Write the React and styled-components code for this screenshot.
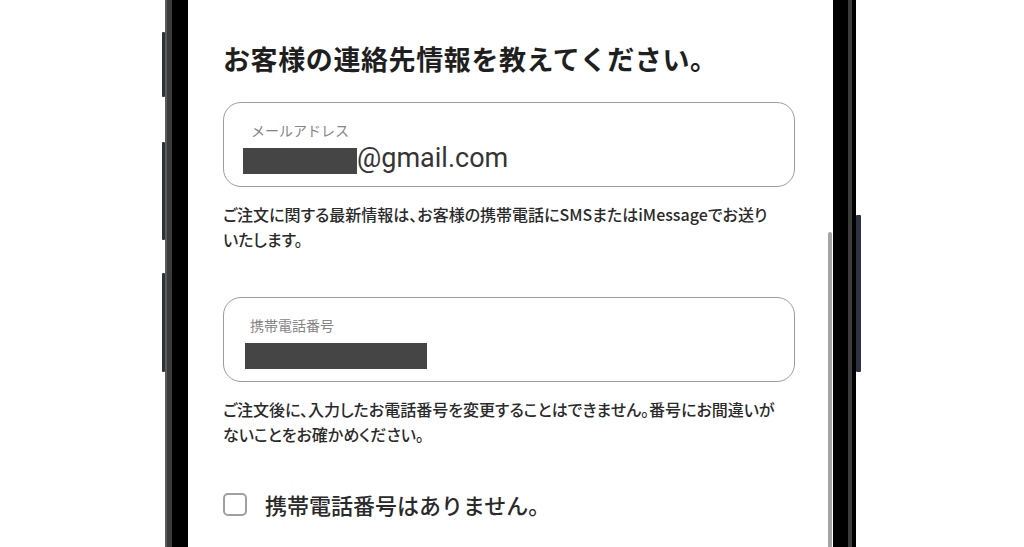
import styled, { createGlobalStyle } from "styled-components";

const GlobalStyle = createGlobalStyle`
  html, body {
    margin: 0;
    padding: 0;
    background: #ffffff;
  }
  body {
    font-family: "Noto Sans CJK JP", "Noto Sans", sans-serif;
  }
`;

const Stage = styled.div`
  width: 1024px;
  height: 547px;
  overflow: hidden;
  background: #ffffff;
`;

const Phone = styled.div`
  position: relative;
  margin-left: 165px;
  width: 691px;
  height: 547px;
  display: flex;
`;

const Edge = styled.div`
  width: ${(p) => p.$w}px;
  height: 100%;
  background: ${(p) => p.$color};
  flex-shrink: 0;
`;

const SideButton = styled.div`
  position: absolute;
  top: ${(p) => p.$top}px;
  height: ${(p) => p.$h}px;
  width: ${(p) => p.$w}px;
  ${(p) => (p.$right ? `right: -${p.$w}px;` : `left: -${p.$w}px;`)}
  background: #2b3342;
  border-radius: 1px;
`;

const Screen = styled.div`
  position: relative;
  width: 645px;
  height: 100%;
  flex-shrink: 0;
  background: #ffffff;
  box-sizing: border-box;
  padding: 41px 38px 0 35px;
  overflow: hidden;
`;

const Scrollbar = styled.div`
  position: absolute;
  right: 1px;
  top: 232px;
  width: 4px;
  height: 340px;
  border-radius: 2px;
  background: #a3a3a3;
`;

const Title = styled.h1`
  margin: 0;
  font-size: 27px;
  line-height: 36px;
  font-weight: 700;
  color: #1f1f1f;
  letter-spacing: 0.6px;
  white-space: nowrap;
`;

const Field = styled.div`
  box-sizing: border-box;
  height: 85px;
  margin-top: ${(p) => p.$mt}px;
  border: 1.5px solid #9c9c9c;
  border-radius: 18px;
  padding: 16.5px 0 0 ${(p) => p.$pl}px;
`;

const FieldLabel = styled.div`
  font-size: 14px;
  line-height: 20px;
  color: #858585;
  padding-left: ${(p) => p.$pl}px;
`;

const ValueRow = styled.div`
  display: flex;
  align-items: flex-start;
  height: 26px;
  margin-top: 8px;
`;

const Redacted = styled.div`
  width: ${(p) => p.$w}px;
  height: 26px;
  background: #454545;
  flex-shrink: 0;
`;

const ValueText = styled.span`
  font-family: "Roboto", "Liberation Sans", sans-serif;
  font-size: 27px;
  line-height: 26px;
  color: #353535;
  margin-top: -3px;
`;

const Help = styled.p`
  margin: 15px 0 0;
  font-size: 16px;
  line-height: 25px;
  font-weight: 500;
  color: #2a2a2a;
  white-space: nowrap;
  font-feature-settings: "palt";
`;

const CheckRow = styled.label`
  display: flex;
  align-items: center;
  height: 30px;
  margin-top: 42px;
  gap: 18px;
`;

const Box = styled.span`
  box-sizing: border-box;
  width: 24px;
  height: 23px;
  border: 2px solid #a0a0a0;
  border-radius: 5px;
  flex-shrink: 0;
`;

const CheckText = styled.span`
  font-size: 22px;
  line-height: 30px;
  font-weight: 500;
  color: #2a2a2a;
`;

export default function App() {
  return (
    <Stage>
      <GlobalStyle />
      <Phone>
        <SideButton $top={32} $h={65} $w={3} />
        <SideButton $top={142} $h={98} $w={3} />
        <SideButton $top={273} $h={99} $w={3} />
        <SideButton $right $top={215} $h={157} $w={5} />
        <Edge $w={2} $color="#5a5a5a" />
        <Edge $w={5} $color="#3a3a3a" />
        <Edge $w={16} $color="#000000" />
        <Screen>
          <Title>お客様の連絡先情報を教えてください。</Title>

          <Field $mt={25} $pl={19}>
            <FieldLabel $pl={8}>メールアドレス</FieldLabel>
            <ValueRow>
              <Redacted $w={114} />
              <ValueText>@gmail.com</ValueText>
            </ValueRow>
          </Field>
          <Help>
            ご注文に関する最新情報は、お客様の携帯電話にSMSまたはiMessageでお送り
            <br />
            いたします。
          </Help>

          <Field $mt={45} $pl={21}>
            <FieldLabel $pl={5}>携帯電話番号</FieldLabel>
            <ValueRow>
              <Redacted $w={182} />
            </ValueRow>
          </Field>
          <Help>
            ご注文後に、入力したお電話番号を変更することはできません。番号にお間違いが
            <br />
            ないことをお確かめください。
          </Help>

          <CheckRow>
            <Box />
            <CheckText>携帯電話番号はありません。</CheckText>
          </CheckRow>
          <Scrollbar />
        </Screen>
        <Edge $w={15} $color="#000000" />
        <Edge $w={4} $color="#3b3b3b" />
        <Edge $w={4} $color="#000000" />
      </Phone>
    </Stage>
  );
}
